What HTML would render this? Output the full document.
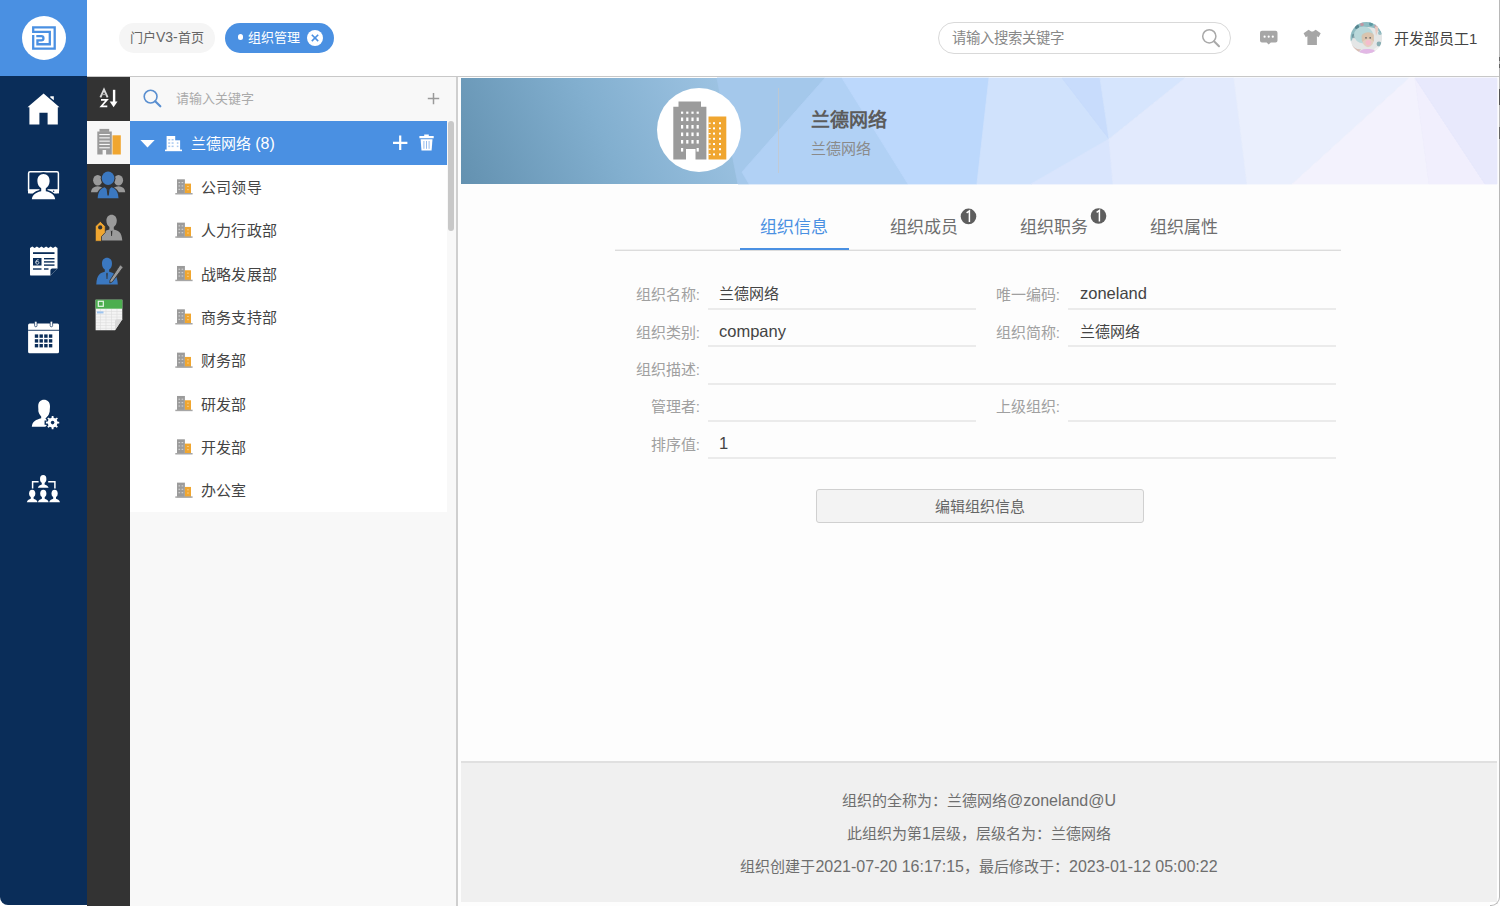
<!DOCTYPE html>
<html lang="zh-CN">
<head>
<meta charset="utf-8">
<style>
*{margin:0;padding:0;box-sizing:border-box}
html,body{width:1500px;height:906px;overflow:hidden;background:#fff;font-family:"Liberation Sans",sans-serif;color:#333}
.a{position:absolute}
.t{position:absolute;white-space:nowrap;line-height:1}
svg{position:absolute;overflow:visible}
.L{font-size:16px}
.lab{position:absolute;white-space:nowrap;line-height:1;font-size:15px;color:#a0a0a0;text-align:right;width:100px}
.val{position:absolute;white-space:nowrap;line-height:1;font-size:15px;color:#444}
.ul{position:absolute;height:2px;background:#ebebeb}
.V{font-size:16.5px}
.ti{position:absolute;white-space:nowrap;line-height:1;font-size:15px;color:#444;left:201px;letter-spacing:.2px}
</style>
</head>
<body>
<!-- ============ LEFT NAV ============ -->
<div class="a" style="left:0;top:0;width:87px;height:905px;background:#0a2d59;border-bottom-left-radius:8px"></div>
<div class="a" style="left:0;top:0;width:87px;height:76px;background:#4a90e2"></div>
<div class="a" style="left:22px;top:16px;width:44px;height:44px;border-radius:50%;background:#fff"></div>
<svg style="left:28px;top:22px" width="32" height="32" viewBox="0 0 32 32"><path d="M8.3 14.1H13.3A2.15 2.15 0 0 1 13.3 18.4H9.45V22.25H21.8V9.9H5.2V5.3H26.7V26.7H5.2V13.1" fill="none" stroke="#4a90e2" stroke-width="2.3"/></svg>
<svg style="left:0;top:0" width="87" height="906" viewBox="0 0 87 906">
<g fill="#fff">
<path d="M27.5 107.2L43.6 93.6L59.5 107.2H57.8V124.5H47.6V112.8H39.4V124.5H29.4V107.2Z"/><path d="M50.3 96.2H53.8V100.3L50.3 97.4Z"/>
</g>
<g>
<rect x="28.6" y="171.8" width="29.8" height="20.6" rx="1.5" fill="none" stroke="#fff" stroke-width="1.5"/>
<rect x="28" y="189.2" width="31" height="4.2" fill="#fff"/>
<circle cx="53.6" cy="191.3" r="0.8" fill="#0a2d59"/>
<path d="M43.4 173C39.2 173 36.2 176.5 36.4 181.2C36.5 184.8 38 187.6 40.3 188.8V190.6C36.5 191.5 31.4 193.2 30.6 200.3H56.4C55.6 193.2 50.5 191.5 46.7 190.6V188.8C49 187.6 50.5 184.8 50.6 181.2C50.8 176.5 47.8 173 43.4 173Z" fill="#0a2d59" stroke="#0a2d59" stroke-width="1.6"/>
<path d="M43.4 174C39.7 174 37.2 177 37.4 181.2C37.5 184.5 39 187 41.2 188.2V191.2C37.5 192 32.6 193.6 31.8 199.2H55.2C54.4 193.6 49.5 192 45.8 191.2V188.2C48 187 49.5 184.5 49.6 181.2C49.8 177 47.3 174 43.4 174Z" fill="#fff"/>
</g>
<g>
<path d="M30 248L32.3 246.6L34.6 248L36.9 246.6L39.2 248L41.5 246.6L43.8 248L46.1 246.6L48.4 248L50.7 246.6L53 248L55.3 246.6L57.5 248V268.5L50.4 275.6H31.2A1.2 1.2 0 0 1 30 274.4Z" fill="#fff"/>
<path d="M57.5 268.5H52.3A1.9 1.9 0 0 0 50.4 270.4V275.6Z" fill="#0a2d59"/>
<rect x="33" y="252.2" width="21.5" height="1.8" fill="#0a2d59"/>
<rect x="33" y="258" width="8.5" height="7.5" fill="#0a2d59"/>
<path d="M38.6 259.8C37 259.5 35.8 260.6 35.8 262.4C35.8 263.6 36.5 264.2 37.3 264.2C38.2 264.2 38.9 263.6 38.9 262.7C38.9 261.8 38.2 261.3 37.4 261.3C36.7 261.3 36 261.8 35.9 262.4" fill="none" stroke="#fff" stroke-width=".8"/>
<rect x="44" y="258" width="10.5" height="1.4" fill="#0a2d59"/>
<rect x="44" y="261.2" width="10.5" height="1.4" fill="#0a2d59"/>
<rect x="44" y="264.4" width="10.5" height="1.4" fill="#0a2d59"/>
<rect x="33" y="268.3" width="8.5" height="1.4" fill="#0a2d59"/>
<rect x="44" y="268.3" width="4.5" height="1.4" fill="#0a2d59"/>
</g>
<g>
<rect x="28.1" y="323.6" width="30.9" height="29.6" rx="1.5" fill="#fff"/>
<rect x="28.1" y="329.8" width="30.9" height="0.9" fill="#0a2d59"/>
<rect x="34.6" y="321.2" width="2.4" height="5.6" rx="1.2" fill="#fff" stroke="#0a2d59" stroke-width="0.7"/>
<rect x="50.2" y="321.2" width="2.4" height="5.6" rx="1.2" fill="#fff" stroke="#0a2d59" stroke-width="0.7"/>
<g fill="#0a2d59">
<rect x="34.8" y="334.4" width="3.4" height="3.4"/><rect x="39.5" y="334.4" width="3.4" height="3.4"/><rect x="44.2" y="334.4" width="3.4" height="3.4"/><rect x="48.9" y="334.4" width="3.4" height="3.4"/>
<rect x="34.8" y="339.2" width="3.4" height="3.4"/><rect x="39.5" y="339.2" width="3.4" height="3.4"/><rect x="44.2" y="339.2" width="3.4" height="3.4"/><rect x="48.9" y="339.2" width="3.4" height="3.4"/>
<rect x="34.8" y="344" width="3.4" height="3.4"/><rect x="39.5" y="344" width="3.4" height="3.4"/><rect x="44.2" y="344" width="3.4" height="3.4"/><rect x="48.9" y="344" width="3.4" height="3.4"/>
</g>
</g>
<g fill="#fff">
<path d="M44 399.8C40.6 399.8 38.2 402.2 38.2 406.2C38.2 408.3 38.6 409.8 38.3 411C38.7 413 39.8 415 41.2 416.6V418.2C36.2 419.6 32.2 421.2 31.8 426.8H47V419.5C46.6 419 46.8 418.2 46.8 417.8C48.2 416 49.4 413.5 49.8 411C49.6 410 50 408.4 50 406.2C50 402.2 47.4 399.8 44 399.8Z"/>
<path d="M57.95 420.95 L59.95 421.11 L59.95 424.09 L57.95 424.25 L57.55 425.21 L58.85 426.74 L56.74 428.85 L55.21 427.55 L54.25 427.95 L54.09 429.95 L51.11 429.95 L50.95 427.95 L49.99 427.55 L48.46 428.85 L46.35 426.74 L47.65 425.21 L47.25 424.25 L45.25 424.09 L45.25 421.11 L47.25 420.95 L47.65 419.99 L46.35 418.46 L48.46 416.35 L49.99 417.65 L50.95 417.25 L51.11 415.25 L54.09 415.25 L54.25 417.25 L55.21 417.65 L56.74 416.35 L58.85 418.46 L57.55 419.99Z" stroke="#0a2d59" stroke-width="1.4"/>
<circle cx="52.6" cy="422.6" r="1.8" fill="#0a2d59"/>
</g>
<g fill="#fff"><ellipse cx="43.20" cy="479.10" rx="3.20" ry="4.10"/><rect x="41.80" y="481.70" width="2.80" height="3.20"/><path d="M37.80 487.80C38.40 485.40 40.40 485.00 41.80 484.40H44.60C46.00 485.00 48.00 485.40 48.60 487.80Z"/><path d="M32.6 488.6V481.7H38.6M48.2 481.7H54.9V488.6" fill="none" stroke="#fff" stroke-width="1.5"/><ellipse cx="32.20" cy="493.60" rx="3.10" ry="3.80"/><rect x="30.80" y="495.90" width="2.80" height="3.40"/><path d="M26.80 502.20C27.40 499.80 29.40 499.40 30.80 498.80H33.60C35.00 499.40 37.00 499.80 37.60 502.20Z"/><ellipse cx="43.30" cy="493.60" rx="3.10" ry="3.80"/><rect x="41.90" y="495.90" width="2.80" height="3.40"/><path d="M37.90 502.20C38.50 499.80 40.50 499.40 41.90 498.80H44.70C46.10 499.40 48.10 499.80 48.70 502.20Z"/><ellipse cx="54.60" cy="493.60" rx="3.10" ry="3.80"/><rect x="53.20" y="495.90" width="2.80" height="3.40"/><path d="M49.20 502.20C49.80 499.80 51.80 499.40 53.20 498.80H56.00C57.40 499.40 59.40 499.80 60.00 502.20Z"/></g>
</svg>


<!-- ============ HEADER ============ -->
<div class="a" style="left:87px;top:76px;width:1413px;height:1px;background:#c8c8c8"></div>
<div class="a" style="left:119px;top:23px;width:96px;height:30px;border-radius:15px;background:#f5f5f5"></div>
<div class="t" style="left:130px;top:30px;font-size:13px;color:#666">门户<span style="font-size:14px">V3-</span>首页</div>
<div class="a" style="left:225px;top:23px;width:109px;height:30px;border-radius:15px;background:#4a90e2"></div>
<div class="a" style="left:237.5px;top:34px;width:5.5px;height:5.5px;border-radius:50%;background:#fff"></div>
<div class="t" style="left:248px;top:31px;font-size:13px;color:#fff">组织管理</div>
<div class="a" style="left:307px;top:30px;width:16px;height:16px;border-radius:50%;background:#fff"></div>


<div class="a" style="left:938px;top:22px;width:293px;height:32px;border-radius:16px;border:1px solid #d9d9d9;background:#fff"></div>
<div class="t" style="left:952px;top:31px;font-size:14.4px;color:#888">请输入搜索关键字</div>
<div class="t" style="left:1394px;top:31px;font-size:15px;color:#444">开发部员工1</div>
<svg style="left:0;top:0" width="1500" height="76" viewBox="0 0 1500 76">
<path d="M311.8 34.7L318.2 41.1M318.2 34.7L311.8 41.1" stroke="#4a90e2" stroke-width="1.6" fill="none"/>
<circle cx="1209.3" cy="36.3" r="6.6" fill="none" stroke="#a9a9a9" stroke-width="1.5"/>
<path d="M1214 41.2L1219 46.2" stroke="#a9a9a9" stroke-width="2" stroke-linecap="round"/>
<path d="M1262 30.7H1275.5A2 2 0 0 1 1277.5 32.7V40.6A2 2 0 0 1 1275.5 42.6H1270.8L1268.7 44.6L1266.6 42.6H1262A2 2 0 0 1 1260 40.6V32.7A2 2 0 0 1 1262 30.7Z" fill="#a6a6a6"/>
<circle cx="1264.6" cy="36.7" r="1.1" fill="#fff"/><circle cx="1268.7" cy="36.7" r="1.1" fill="#fff"/><circle cx="1272.8" cy="36.7" r="1.1" fill="#fff"/>
<path d="M1308.6 29.7L1310.5 30.9C1311.3 31.8 1313 31.8 1313.8 30.9L1315.7 29.7L1320.7 33.3L1318.6 37.2L1316.9 36.2V44.9H1307.4V36.2L1305.7 37.2L1303.6 33.3Z" fill="#a6a6a6"/>
<defs><clipPath id="av"><circle cx="1366.3" cy="37.9" r="15.8"/></clipPath>
<radialGradient id="avg" cx="0.5" cy="0.5" r="0.6"><stop offset="0" stop-color="#c9d9d6"/><stop offset="1" stop-color="#8fb3b7"/></radialGradient></defs>
<g clip-path="url(#av)">
<rect x="1350" y="21" width="33" height="34" fill="#e4e6e6"/>
<path d="M1350 21H1383V36C1380 31 1375 27 1368 27C1360 27 1355 31 1352 40L1350 42Z" fill="#8fbcc2"/>
<circle cx="1357" cy="27" r="2.2" fill="#3d6f7a" opacity=".7"/>
<circle cx="1362" cy="24.5" r="1.8" fill="#c98f9c" opacity=".8"/>
<circle cx="1371" cy="24" r="2" fill="#4f8f98" opacity=".8"/>
<circle cx="1376" cy="26.5" r="1.8" fill="#d29aa4" opacity=".8"/>
<circle cx="1354" cy="36" r="2.2" fill="#5a7f88" opacity=".6"/>
<circle cx="1380" cy="33" r="2" fill="#6aa3ab" opacity=".6"/>
<ellipse cx="1363.5" cy="35" rx="9.5" ry="8.5" fill="#b9d8da"/>
<path d="M1375 27C1377 25 1379 27 1378 30L1376 36Z" fill="#e8c9c0"/>
<ellipse cx="1368" cy="40" rx="5.6" ry="7.2" fill="#e4cfc2"/>
<path d="M1361.5 36C1363 31.5 1372 31 1374 35L1374 42C1372 38 1366 38 1362 42Z" fill="#d8c0a8" opacity=".8"/>
<circle cx="1366" cy="37.8" r=".9" fill="#6a6a6a"/><circle cx="1370.2" cy="37.8" r=".9" fill="#6a6a6a"/>
<circle cx="1368.2" cy="42.6" r="2.7" fill="#f4bdcc"/>
<path d="M1357 55C1359 50 1363 48.5 1368 49C1373 49 1376 50.5 1378 55Z" fill="#e2b8e5"/>
<path d="M1374 49C1377 47 1381 45 1383 44V55H1377Z" fill="#f2f2f2"/>
<circle cx="1379" cy="44" r="2.4" fill="#4e8a93" opacity=".6"/>
<path d="M1352 45C1354 48 1358 50 1361 49L1358 53L1352 51Z" fill="#d4b3a8" opacity=".8"/>
</g>
</svg>

<!-- ============ SECOND COLUMN ============ -->
<div class="a" style="left:87px;top:77px;width:43px;height:829px;background:#333"></div>
<div class="a" style="left:87px;top:121px;width:43px;height:43px;background:#f7f7f7"></div>
<svg style="left:87px;top:77px" width="43" height="260" viewBox="87 77 43 260">
<!-- AZ sort -->
<g fill="none" stroke="#fff">
<path d="M100.4 97.4L104 89.6L107.6 97.4" stroke-width="1.9" stroke="#dadada"/><path d="M101.8 94.6H106.2" stroke-width="1" stroke="#aaa"/>
<path d="M101 99.9H107L101.3 106.3H107.3" stroke-width="1.7"/>
</g>
<rect x="112.9" y="89.8" width="2.4" height="12.5" fill="#fff"/>
<path d="M109.7 101.5H117.5L113.6 107.2Z" fill="#fff"/>
<!-- building -->
<g>
<rect x="99.5" y="128.9" width="9.7" height="3" fill="#9b9b9b"/>
<path d="M97.3 131.5H111.8V154.5H106.1V150H102.6V154.5H97.3Z" fill="#9b9b9b"/>
<g fill="#f7f7f7">
<rect x="99.3" y="134" width="10.5" height="1.1"/>
<rect x="99.3" y="137.3" width="10.5" height="1.1"/>
<rect x="99.3" y="140.6" width="10.5" height="1.1"/>
<rect x="99.3" y="143.9" width="10.5" height="1.1"/>
<rect x="99.3" y="147.2" width="10.5" height="1.1"/>
</g>
<rect x="112.5" y="135.3" width="8.3" height="19.2" fill="#f0a630"/>
</g>
<!-- people -->
<g fill="#9a9a9a">
<ellipse cx="97.7" cy="180.3" rx="4.6" ry="5.2"/>
<path d="M91 192.3C91.4 187.8 94 186.8 97.7 186.3C101.4 186.8 104 187.8 104.4 192.3Z"/>
<ellipse cx="118.5" cy="180.3" rx="4.6" ry="5.2"/>
<path d="M111.8 192.3C112.2 187.8 114.8 186.8 118.5 186.3C122.2 186.8 124.8 187.8 125.2 192.3Z"/>
</g>
<ellipse cx="108.1" cy="178.3" rx="7.4" ry="7.9" fill="#333"/>
<path d="M96 199.5C96.3 191 99.5 187.3 108.1 186C116.7 187.3 119.9 191 120.2 199.5Z" fill="#333"/>
<g fill="#3b78c0">
<ellipse cx="108.1" cy="178.3" rx="6.3" ry="6.8"/>
<path d="M97.7 198.3C98 191.5 100.5 188.5 104.8 187.2L108.1 190.5L111.4 187.2C115.7 188.5 118.2 191.5 118.5 198.3Z"/>
</g>
<path d="M106.6 188.4L108.1 190.5L109.6 188.4L108.8 195.5H107.4Z" fill="#333"/>
<!-- person tag -->
<g fill="#9a9a9a">
<path d="M111.6 214.7C108.6 214.7 106.4 217 106.4 220.6C106.4 223.6 107.6 225.8 109.4 227V229.4C105 230.3 101.2 232 100.8 240.6H122.3C121.9 232 118.2 230.3 113.8 229.4V227C115.6 225.8 116.8 223.6 116.8 220.6C116.8 217 114.6 214.7 111.6 214.7Z"/>
</g>
<path d="M110.8 230.2L111.6 231.2L112.4 230.2L112 236H111.2Z" fill="#333"/>
<path d="M95.3 226.2L100.3 221.4L105.3 226.2V232.5L101.5 236.5V241.3H95.3Z" fill="#f0a630" stroke="#333" stroke-width="0.8" stroke-linejoin="round"/>
<circle cx="100.2" cy="227.4" r="2.1" fill="#333"/>
<!-- person pen -->
<g fill="#3b78c0">
<path d="M107 257.8C104.1 257.8 102 260 102 263.4C102 266.2 103.1 268.3 104.8 269.4V271.8C100.5 272.7 96.8 274.5 96.3 284.4H117.8C117.3 274.5 113.6 272.7 109.2 271.8V269.4C110.9 268.3 112 266.2 112 263.4C112 260 109.9 257.8 107 257.8Z"/>
</g>
<path d="M106.2 272.6L107 273.6L107.8 272.6L107.4 279H106.6Z" fill="#333"/>
<path d="M120.2 264.8L123.2 267.2L112.4 281.8L109.8 283L110 280.2Z" fill="#9a9a9a" stroke="#333" stroke-width="0.9"/>
<!-- spreadsheet -->
<path d="M95.6 299.7H122.3V319.2L115 330.3H95.6Z" fill="#f4f4f4"/>
<rect x="95.6" y="299.7" width="26.7" height="9" fill="#4cae4f"/>
<rect x="98.3" y="301.3" width="5" height="5" fill="none" stroke="#e8f5e8" stroke-width="1.2"/>
<g stroke="#dcdcdc" stroke-width="0.6">
<path d="M96 311.5H122M96 314.3H122M96 317.1H122M96 319.9H120M96 322.7H118M96 325.5H116.5M96 328.3H115.3"/>
<path d="M100.5 309V330M106 309V330M111.5 309V330M117 309V323"/>
</g>
<rect x="97" y="311.4" width="6.5" height="2" fill="#9cc4f0"/>
<path d="M122.3 319.2L115 330.3V321A1.8 1.8 0 0 1 116.8 319.2Z" fill="#d8d8d8"/>
</svg>


<!-- ============ TREE PANEL ============ -->
<div class="a" style="left:130px;top:77px;width:326px;height:829px;background:#f8f8f8"></div>
<div class="a" style="left:456px;top:77px;width:2px;height:829px;background:#cfcfcf"></div>
<div class="t" style="left:176px;top:92px;font-size:13px;color:#aaa">请输入关键字</div>
<div class="a" style="left:130px;top:121px;width:317px;height:44px;background:#4a90e2"></div>
<div class="t" style="left:191px;top:136px;font-size:15px;color:#fff">兰德网络 <span style="font-size:16px">(8)</span></div>
<div class="a" style="left:130px;top:165px;width:317px;height:347px;background:#fff"></div>
<div class="a" style="left:447.5px;top:121px;width:6.5px;height:110px;border-radius:3.25px;background:#c8c8c8"></div>
<div class="ti" style="top:180px">公司领导</div>
<div class="ti" style="top:223px">人力行政部</div>
<div class="ti" style="top:267px">战略发展部</div>
<div class="ti" style="top:310px">商务支持部</div>
<div class="ti" style="top:353px">财务部</div>
<div class="ti" style="top:397px">研发部</div>
<div class="ti" style="top:440px">开发部</div>
<div class="ti" style="top:483px">办公室</div>
<svg style="left:130px;top:77px" width="330" height="440" viewBox="130 77 330 440">
<circle cx="150.6" cy="96.6" r="6.4" fill="none" stroke="#5a8fd0" stroke-width="1.6"/>
<path d="M155.2 101.3L160.3 106.3" stroke="#5a8fd0" stroke-width="2.2" stroke-linecap="round"/>
<path d="M433.5 92.9V104.2M427.8 98.5H439.2" stroke="#9a9a9a" stroke-width="1.5"/>
<path d="M140.4 140.1H154.7L147.5 147.6Z" fill="#fff"/>
<g fill="#fff">
<rect x="166.6" y="136" width="8.6" height="14.5"/>
<rect x="175" y="140.3" width="5.1" height="10.2"/>
<rect x="165" y="149.6" width="17" height="1.6"/>
</g>
<g fill="#a9c9f0">
<rect x="168.2" y="139" width="2" height="1.5"/><rect x="171.6" y="139" width="2" height="1.5"/>
<rect x="168.2" y="142.3" width="2" height="1.5"/><rect x="171.6" y="142.3" width="2" height="1.5"/><rect x="176.8" y="142.3" width="1.6" height="1.5"/>
<rect x="168.2" y="145.6" width="2" height="1.5"/><rect x="171.6" y="145.6" width="2" height="1.5"/><rect x="176.8" y="145.6" width="1.6" height="1.5"/>
</g>
<path d="M393 142.8H407.4M400.2 135.6V150" stroke="#fff" stroke-width="2.2"/>
<g fill="#fff">
<path d="M424.2 134.6H428.8V136.1H433.7V138.3H419.4V136.1H424.2Z"/>
<path d="M420.6 139.3H432.5L431.6 150.5H421.5Z"/>
</g>
<path d="M423.9 141V148.8M426.5 141V148.8M429.1 141V148.8" stroke="#8ab4ea" stroke-width="0.9"/>
<g id="bi">
<rect x="177" y="179.3" width="7.9" height="14.7" fill="#9b9b9b"/>
<rect x="184.9" y="183.6" width="6.1" height="10.4" fill="#f0a630"/>
<rect x="175.3" y="193" width="17.3" height="1.5" fill="#a6a6a6"/>
<g fill="#d4d4d4"><rect x="178.5" y="182" width="1.6" height="1.1"/><rect x="181.6" y="182" width="1.6" height="1.1"/><rect x="178.5" y="185.4" width="1.6" height="1.1"/><rect x="181.6" y="185.4" width="1.6" height="1.1"/><rect x="178.5" y="188.8" width="1.6" height="1.1"/><rect x="181.6" y="188.8" width="1.6" height="1.1"/></g>
<g fill="#f7d59a"><rect x="187.2" y="186" width="1.5" height="1"/><rect x="187.2" y="189.2" width="1.5" height="1"/></g>
</g>
<use href="#bi" y="43.33"/><use href="#bi" y="86.67"/><use href="#bi" y="130"/><use href="#bi" y="173.33"/><use href="#bi" y="216.67"/><use href="#bi" y="260"/><use href="#bi" y="303.33"/>
</svg>


<!-- ============ MAIN ============ -->
<div class="a" style="left:458px;top:77px;width:1041px;height:829px;background:#fdfdfd"></div>
<div class="a" style="left:1490px;top:880px;width:10px;height:26px;background:#fff;border-right:1px solid #b8b8b8;border-bottom:1px solid #b8b8b8;border-bottom-right-radius:9px;"></div>
<div class="a" style="left:1499px;top:0;width:1px;height:890px;background:#b8b8b8"></div>
<div class="a" style="left:1499px;top:57px;width:1px;height:4px;background:#666"></div>
<div class="a" style="left:1499px;top:64px;width:1px;height:4px;background:#666"></div>
<div class="a" style="left:1499px;top:89px;width:1px;height:16px;background:#555"></div>
<div class="a" style="left:1499px;top:127px;width:1px;height:12px;background:#666"></div>
<div class="a" style="left:461px;top:78px;width:1036px;height:106px;background:linear-gradient(90deg,#6695b4 0%,#8db8d6 22%,#a9ccf2 40%,#bcd7fb 52%,#d6e4fc 68%,#ebeefd 85%,#e8e9fc 100%)"></div>
<svg style="left:461px;top:78px" width="1036" height="106" viewBox="461 78 1036 106">
<defs><linearGradient id="bg1" x1="461" y1="184" x2="760" y2="40" gradientUnits="userSpaceOnUse"><stop offset="0" stop-color="#6391b0"/><stop offset="0.45" stop-color="#82afcf"/><stop offset="1" stop-color="#a8cbea"/></linearGradient></defs>
<rect x="461" y="78" width="1036" height="106" fill="url(#bg1)"/>
<polygon points="717,78 825,78 742,172 749,184 738,184" fill="#a4c8eb" stroke="#a4c8eb" stroke-width=".8"/>
<polygon points="825,78 842,78 908,184 749,184 742,172" fill="#b1d1f5" stroke="#b1d1f5" stroke-width=".8"/>
<polygon points="842,78 989,78 977,184 908,184" fill="#bcd8fc" stroke="#bcd8fc" stroke-width=".8"/>
<polygon points="989,78 1062,78 1109,139 1031,184 977,184" fill="#d0e2fc" stroke="#d0e2fc" stroke-width=".8"/>
<polygon points="1062,78 1100,78 1109,139" fill="#c8dcfc" stroke="#c8dcfc" stroke-width=".8"/>
<polygon points="1100,78 1185,78 1109,139" fill="#d6e5fd" stroke="#d6e5fd" stroke-width=".8"/>
<polygon points="1109,139 1113,184 1031,184" fill="#d9e5fd" stroke="#d9e5fd" stroke-width=".8"/>
<polygon points="1109,139 1185,78 1234,78 1247,184 1113,184" fill="#e2eafd" stroke="#e2eafd" stroke-width=".8"/>
<polygon points="1234,78 1409,78 1292,184 1247,184" fill="#eaeffd" stroke="#eaeffd" stroke-width=".8"/>
<polygon points="1409,78 1415,78 1429,184 1292,184" fill="#f3f2fd" stroke="#f3f2fd" stroke-width=".8"/>
<polygon points="1415,78 1485,184 1429,184" fill="#f1effd" stroke="#f1effd" stroke-width=".8"/>
<polygon points="1415,78 1497,78 1497,184 1485,184" fill="#e8e9fc" stroke="#e8e9fc" stroke-width=".8"/>
</svg>

<div class="a" style="left:657px;top:88px;width:84px;height:84px;border-radius:50%;background:#fff"></div>
<svg style="left:657px;top:88px" width="84" height="84" viewBox="657 88 84 84">
<path d="M678.5 101.4H701V106.7H706.4V159.5H695.5V149H686V159.5H673.3V106.7H678.5Z" fill="#9b9b9b"/>
<g fill="#fff" id="bw">
<rect x="681" y="111.6" width="2.2" height="2.2"/><rect x="686.2" y="111.6" width="2.2" height="2.2"/><rect x="691.4" y="111.6" width="2.2" height="2.2"/><rect x="696.6" y="111.6" width="2.2" height="2.2"/>
</g>
<g fill="#fff">
<rect x="681" y="117.5" width="2.2" height="3.6"/><rect x="686.2" y="117.5" width="2.2" height="3.6"/><rect x="691.4" y="117.5" width="2.2" height="3.6"/><rect x="696.6" y="117.5" width="2.2" height="3.6"/>
<rect x="681" y="125" width="2.2" height="3.6"/><rect x="686.2" y="125" width="2.2" height="3.6"/><rect x="691.4" y="125" width="2.2" height="3.6"/><rect x="696.6" y="125" width="2.2" height="3.6"/>
<rect x="681" y="132.5" width="2.2" height="3.6"/><rect x="686.2" y="132.5" width="2.2" height="3.6"/><rect x="691.4" y="132.5" width="2.2" height="3.6"/><rect x="696.6" y="132.5" width="2.2" height="3.6"/>
<rect x="681" y="140" width="2.2" height="3.6"/><rect x="686.2" y="140" width="2.2" height="3.6"/><rect x="691.4" y="140" width="2.2" height="3.6"/><rect x="696.6" y="140" width="2.2" height="3.6"/>
<rect x="681" y="148" width="2.2" height="3.6"/><rect x="696.6" y="148" width="2.2" height="3.6"/>
</g>
<rect x="708.5" y="116.5" width="17.8" height="43" fill="#f0a630"/>
<g fill="#fff"><rect x="713" y="122.2" width="2" height="2"/><rect x="719" y="122.2" width="2" height="2"/><rect x="708.5" y="122.6" width="2.2" height="1.2"/><rect x="713" y="127.4" width="2" height="2"/><rect x="719" y="127.4" width="2" height="2"/><rect x="708.5" y="127.8" width="2.2" height="1.2"/><rect x="713" y="132.6" width="2" height="2"/><rect x="719" y="132.6" width="2" height="2"/><rect x="708.5" y="133.0" width="2.2" height="1.2"/><rect x="713" y="137.8" width="2" height="2"/><rect x="719" y="137.8" width="2" height="2"/><rect x="708.5" y="138.2" width="2.2" height="1.2"/><rect x="713" y="143.0" width="2" height="2"/><rect x="719" y="143.0" width="2" height="2"/><rect x="708.5" y="143.4" width="2.2" height="1.2"/><rect x="713" y="148.2" width="2" height="2"/><rect x="719" y="148.2" width="2" height="2"/><rect x="708.5" y="148.6" width="2.2" height="1.2"/><rect x="713" y="153.4" width="2" height="2"/><rect x="719" y="153.4" width="2" height="2"/><rect x="708.5" y="153.8" width="2.2" height="1.2"/></g>
</svg>

<div class="a" style="left:778px;top:88px;width:1px;height:85px;background:rgba(200,200,200,.7)"></div>
<div class="t" style="left:811px;top:111px;font-size:19px;font-weight:bold;color:#5c5c5c">兰德网络</div>
<div class="t" style="left:811px;top:141px;font-size:15px;color:#8a8a8a">兰德网络</div>

<div class="a" style="left:615px;top:249px;width:726px;height:1px;background:#f0f0f0"></div>
<div class="a" style="left:615px;top:250px;width:726px;height:1px;background:#dcdcdc"></div>
<div class="a" style="left:740px;top:248px;width:109px;height:2px;background:#4a90e2"></div>
<div class="t" style="left:760px;top:219px;font-size:17px;color:#4a90e2">组织信息</div>
<div class="t" style="left:890px;top:219px;font-size:17px;color:#6e6e6e">组织成员</div>
<div class="t" style="left:1020px;top:219px;font-size:17px;color:#6e6e6e">组织职务</div>
<div class="t" style="left:1150px;top:219px;font-size:17px;color:#6e6e6e">组织属性</div>
<svg style="left:950px;top:200px" width="170" height="40" viewBox="950 200 170 40">
<circle cx="968.5" cy="216.4" r="7.8" fill="#5e5e5e"/>
<path d="M966.6 212.8L969.4 210.9V222" fill="none" stroke="#fff" stroke-width="1.5"/>
<circle cx="1098.5" cy="216" r="7.8" fill="#5e5e5e"/>
<path d="M1096.6 212.4L1099.4 210.5V221.6" fill="none" stroke="#fff" stroke-width="1.5"/>
</svg>


<!-- form -->
<div class="lab" style="left:600px;top:287px">组织名称:</div>
<div class="val" style="left:719px;top:286px">兰德网络</div>
<div class="ul" style="left:708px;top:308px;width:268px"></div>
<div class="lab" style="left:960px;top:287px">唯一编码:</div>
<div class="val V" style="left:1080px;top:285px">zoneland</div>
<div class="ul" style="left:1068px;top:308px;width:268px"></div>

<div class="lab" style="left:600px;top:325px">组织类别:</div>
<div class="val V" style="left:719px;top:323px">company</div>
<div class="ul" style="left:708px;top:345px;width:268px"></div>
<div class="lab" style="left:960px;top:325px">组织简称:</div>
<div class="val" style="left:1080px;top:324px">兰德网络</div>
<div class="ul" style="left:1068px;top:345px;width:268px"></div>

<div class="lab" style="left:600px;top:362px">组织描述:</div>
<div class="ul" style="left:708px;top:383px;width:628px"></div>

<div class="lab" style="left:600px;top:399px">管理者:</div>
<div class="ul" style="left:708px;top:420px;width:268px"></div>
<div class="lab" style="left:960px;top:399px">上级组织:</div>
<div class="ul" style="left:1068px;top:420px;width:268px"></div>

<div class="lab" style="left:600px;top:437px">排序值:</div>
<div class="val V" style="left:719px;top:435px">1</div>
<div class="ul" style="left:708px;top:457px;width:628px"></div>

<div class="a" style="left:816px;top:489px;width:328px;height:34px;border:1px solid #d0d0d0;border-radius:3px;background:#f3f3f3"></div>
<div class="t" style="left:816px;width:328px;text-align:center;top:499px;font-size:15px;color:#666">编辑组织信息</div>

<!-- footer -->
<div class="a" style="left:461px;top:761px;width:1036px;height:141px;background:#f0f0f0;border-top:2px solid #e0e0e0"></div>
<div class="t" style="left:461px;width:1036px;text-align:center;top:793px;font-size:15px;color:#6e6e6e">组织的全称为：兰德网络<span class="L">@zoneland@U</span></div>
<div class="t" style="left:461px;width:1036px;text-align:center;top:826px;font-size:15px;color:#6e6e6e">此组织为第<span class="L">1</span>层级，层级名为：兰德网络</div>
<div class="t" style="left:461px;width:1036px;text-align:center;top:859px;font-size:15px;color:#6e6e6e">组织创建于<span class="L">2021-07-20 16:17:15</span>，最后修改于：<span class="L">2023-01-12 05:00:22</span></div>
</body>
</html>
